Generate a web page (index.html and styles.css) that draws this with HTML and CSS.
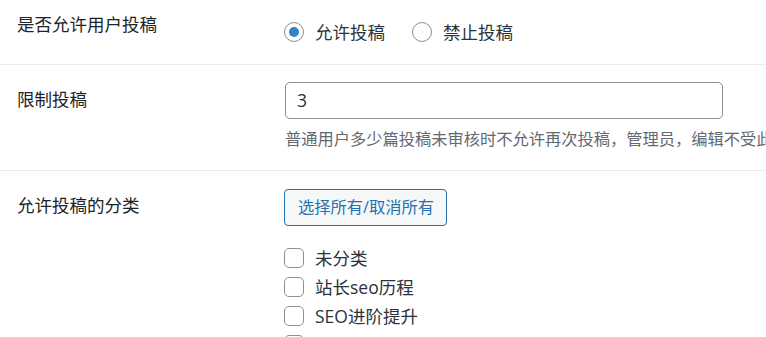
FILE: index.html
```html
<!DOCTYPE html>
<html lang="zh-CN">
<head>
<meta charset="utf-8">
<title>投稿设置</title>
<link rel="stylesheet" href="styles.css">
</head>
<body>
<div class="form">
  <div class="row row-first">
    <div class="th">是否允许用户投稿</div>
    <div class="td radios">
      <label class="radio"><span class="radio-box checked"></span><span>允许投稿</span></label>
      <label class="radio"><span class="radio-box"></span><span>禁止投稿</span></label>
    </div>
  </div>
  <div class="row row-limit">
    <div class="th">限制投稿</div>
    <div class="td">
      <div class="input">3</div>
      <p class="description">普通用户多少篇投稿未审核时不允许再次投稿，管理员，编辑不受此</p>
    </div>
  </div>
  <div class="row row-cats">
    <div class="th">允许投稿的分类</div>
    <div class="td">
      <div class="button">选择所有/取消所有</div>
      <ul class="checks">
        <li><span class="check-box"></span><span>未分类</span></li>
        <li><span class="check-box"></span><span>站长seo历程</span></li>
        <li><span class="check-box"></span><span>SEO进阶提升</span></li>
        <li><span class="check-box"></span><span class="hidden-label">网站运营</span></li>
      </ul>
    </div>
  </div>
</div>
</body>
</html>
```
FILE: styles.css
```css
html, body {
  margin: 0;
  padding: 0;
  background: #ffffff;
  overflow: hidden;
}
body {
  width: 766px;
  height: 337px;
  font-family: "Open Sans", "Noto Sans CJK SC", sans-serif;
  font-size: 17.5px;
  font-weight: 400;
  color: #3c434a;
}
.row {
  display: grid;
  grid-template-columns: 284px 1fr;
  border-bottom: 1px solid #ebebeb;
}
.th {
  padding-left: 17px;
  line-height: 22.75px;
  color: #1d2327;
  white-space: nowrap;
}
.td {
  min-width: 0;
  white-space: nowrap;
  overflow: hidden;
}

/* row 1 */
.row-first .th { padding-top: 13px; }
.row-first .td { padding: 22px 0 22px 0; }
.radios { display: flex; }
.radio {
  display: flex;
  align-items: center;
  height: 20px;
  line-height: 20px;
  margin-right: 27px;
  color: #2c3338;
}
.radio-box {
  box-sizing: border-box;
  width: 20px;
  height: 20px;
  border: 1px solid #8c8f94;
  border-radius: 50%;
  margin-right: 11px;
  display: flex;
  align-items: center;
  justify-content: center;
  background: #fff;
}
.radio-box.checked::before {
  content: "";
  width: 10px;
  height: 10px;
  border-radius: 50%;
  background: #3582c4;
}

/* row 2 */
.row-limit .th { padding-top: 23px; }
.row-limit .td { padding: 17px 0 19px 0; }
.input {
  box-sizing: border-box;
  width: 438px;
  height: 37px;
  margin-left: 1px;
  border: 1px solid #8c8f94;
  border-radius: 5px;
  padding: 0 11px;
  line-height: 35px;
  color: #2c3338;
  background: #fff;
}
.description {
  margin: 8px 0 0 1px;
  font-size: 16.25px;
  line-height: 24px;
  color: #646970;
}

/* row 3 */
.row-cats .th { padding-top: 23px; }
.row-cats .td { padding: 18px 0 0 0; }
.button {
  box-sizing: border-box;
  display: inline-block;
  height: 37px;
  padding: 0 12px 0 13px;
  border: 1px solid #2271b1;
  border-radius: 4px;
  background: #f6f7f7;
  color: #2271b1;
  font-size: 16.25px;
  line-height: 35px;
}
.checks {
  list-style: none;
  margin: 18px 0 0 0;
  padding: 0;
}
.checks li {
  display: flex;
  align-items: flex-start;
  height: 29px;
  line-height: 29px;
  color: #2c3338;
}
.check-box {
  box-sizing: border-box;
  flex: none;
  width: 20px;
  height: 20px;
  margin-top: 4px;
  margin-right: 11px;
  border: 1px solid #8c8f94;
  border-radius: 5px;
  background: #fff;
}
.hidden-label {
  visibility: hidden;
}
```
